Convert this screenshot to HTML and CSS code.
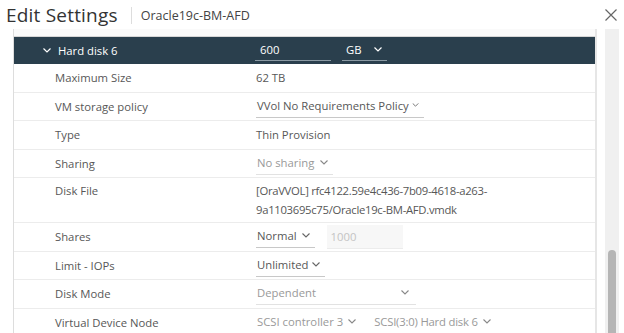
FILE: index.html
```html
<!DOCTYPE html>
<html lang="en">

<head>
  <meta charset="UTF-8" />
  <title>Edit Settings</title>
  <link rel="stylesheet" href="styles.css">
</head>

<body>
  <div class="modal">
    <div class="modal-header">
      <h1 class="title">Edit Settings</h1>
      <span class="divider"></span>
      <span class="subtitle">Oracle19c-BM-AFD</span>
      <button class="close-btn" aria-label="Close">
        <svg width="12" height="12" viewBox="0 0 12 12"><path d="M0.5 0.5L11.5 11.5M11.5 0.5L0.5 11.5" stroke="#666" stroke-width="1.2" fill="none"/></svg>
      </button>
    </div>

    <div class="modal-body">
      <div class="panel">
        <div class="prev-row"></div>

        <div class="disk-header">
          <div class="disk-title">
            <svg class="chev" width="8" height="5" viewBox="0 0 8 5"><path d="M0.5 0.5L4 4L7.5 0.5" stroke="#fff" stroke-width="1.2" fill="none"/></svg>
            Hard disk 6
          </div>
          <div class="disk-controls">
            <span class="dark-input">600</span>
            <span class="dark-select">GB
              <svg class="chev" width="8" height="5" viewBox="0 0 8 5"><path d="M0.5 0.5L4 4L7.5 0.5" stroke="#fff" stroke-width="1.2" fill="none"/></svg>
            </span>
          </div>
        </div>

        <div class="row">
          <div class="label">Maximum Size</div>
          <div class="value">62 TB</div>
        </div>
        <div class="row">
          <div class="label">VM storage policy</div>
          <div class="value"><span class="select select-policy">VVol No Requirements Policy<svg class="chev" width="7" height="4" viewBox="0 0 8 5"><path d="M0.5 0.5L4 4L7.5 0.5" stroke="#666" stroke-width="1.1" fill="none"/></svg></span></div>
        </div>
        <div class="row">
          <div class="label">Type</div>
          <div class="value">Thin Provision</div>
        </div>
        <div class="row">
          <div class="label">Sharing</div>
          <div class="value"><span class="select disabled sel-sharing">No sharing<svg class="chev" width="8" height="5" viewBox="0 0 8 5"><path d="M0.5 0.5L4 4L7.5 0.5" stroke="#888" stroke-width="1.1" fill="none"/></svg></span></div>
        </div>
        <div class="row row-tall">
          <div class="label">Disk File</div>
          <div class="value file-path">[OraVVOL] rfc4122.59e4c436-7b09-4618-a263-<br>9a1103695c75/Oracle19c-BM-AFD.vmdk</div>
        </div>
        <div class="row">
          <div class="label">Shares</div>
          <div class="value">
            <span class="select sel-shares">Normal<svg class="chev" width="8" height="5" viewBox="0 0 8 5"><path d="M0.5 0.5L4 4L7.5 0.5" stroke="#666" stroke-width="1.1" fill="none"/></svg></span>
            <span class="input-disabled">1000</span>
          </div>
        </div>
        <div class="row">
          <div class="label">Limit - IOPs</div>
          <div class="value"><span class="select sel-limit">Unlimited<svg class="chev" width="8" height="5" viewBox="0 0 8 5"><path d="M0.5 0.5L4 4L7.5 0.5" stroke="#666" stroke-width="1.1" fill="none"/></svg></span></div>
        </div>
        <div class="row">
          <div class="label">Disk Mode</div>
          <div class="value"><span class="select disabled sel-mode">Dependent<svg class="chev" width="8" height="5" viewBox="0 0 8 5"><path d="M0.5 0.5L4 4L7.5 0.5" stroke="#888" stroke-width="1.1" fill="none"/></svg></span></div>
        </div>
        <div class="row">
          <div class="label">Virtual Device Node</div>
          <div class="value">
            <span class="select disabled sel-ctrl">SCSI controller 3<svg class="chev" width="8" height="5" viewBox="0 0 8 5"><path d="M0.5 0.5L4 4L7.5 0.5" stroke="#888" stroke-width="1.1" fill="none"/></svg></span>
            <span class="select disabled sel-node">SCSI(3:0) Hard disk 6<svg class="chev" width="8" height="5" viewBox="0 0 8 5"><path d="M0.5 0.5L4 4L7.5 0.5" stroke="#888" stroke-width="1.1" fill="none"/></svg></span>
          </div>
        </div>
      </div>

      <div class="scrollbar">
        <div class="thumb"></div>
      </div>
    </div>
  </div>
</body>

</html>
```

FILE: styles.css
```css
:root {
  --band: #2a3f4d;
  --text: #575757;
  --muted: #999;
  --line: #ececec;
  --underline: #c8c8c8;
}

* {
  box-sizing: border-box;
}

body {
  margin: 0;
  background: #fff;
  font-family: 'Open Sans', sans-serif;
  color: var(--text);
  overflow: hidden;
}

.modal {
  width: 624px;
  height: 333px;
  display: flex;
  flex-direction: column;
}

.modal-header {
  height: 29px;
  display: flex;
  align-items: center;
  padding-left: 6px;
}

.title {
  margin: 0;
  font-size: 19px;
  font-weight: 400;
  color: #333;
  letter-spacing: 0.2px;
}

.divider {
  width: 1px;
  height: 17px;
  background: #ddd;
  margin: 1px 9px 0 13px;
}

.subtitle {
  font-size: 12.5px;
  color: #444;
  margin-top: 1px;
}

.close-btn {
  margin-left: auto;
  margin-right: 7px;
  margin-top: 1px;
  border: none;
  background: none;
  padding: 0;
  display: flex;
}

.modal-body {
  flex: 1;
  display: flex;
  min-height: 0;
}

.panel {
  width: 584px;
  margin-left: 13px;
  border-left: 1px solid #ddd;
  border-right: 2px solid #e6e6e6;
  font-size: 11.3px;
  white-space: nowrap;
}

.prev-row {
  height: 8px;
  background: #fafafa;
  border-bottom: 1px solid #d6d6d6;
}

.disk-header {
  height: 27px;
  background: var(--band);
  color: #fff;
  display: grid;
  grid-template-columns: 241px 1fr;
  align-items: center;
}

.disk-title {
  display: flex;
  align-items: center;
  padding-left: 29px;
  gap: 7px;
}

.disk-controls {
  display: flex;
  align-items: center;
  gap: 11px;
}

.dark-input {
  width: 76px;
  padding: 2px 5px 3px;
  border-bottom: 1px solid #8a99a3;
}

.dark-select {
  width: 45px;
  padding: 2px 5px 3px 4px;
  border-bottom: 1px solid #8a99a3;
  display: flex;
  align-items: center;
  justify-content: space-between;
}

.row {
  height: 28.5px;
  display: grid;
  grid-template-columns: 242px 1fr;
  align-items: center;
  border-bottom: 1px solid var(--line);
}

.row-tall {
  height: 45px;
  align-items: start;
  padding-top: 3px;
}

.row-tall .label {
  padding-top: 2px;
}

.label {
  padding-left: 41px;
}

.value {
  display: flex;
  align-items: center;
  gap: 12px;
}

.file-path {
  display: block;
  line-height: 19px;
  letter-spacing: -0.3px;
}

.select {
  display: inline-flex;
  align-items: center;
  justify-content: space-between;
  padding: 3px 5px 4px 1px;
  border-bottom: 1px solid var(--underline);
}

.select.disabled {
  color: var(--muted);
  border-bottom-color: #e2e2e2;
}

.select-policy {
  min-width: 164px;
  gap: 3px;
  justify-content: flex-start;
}

.sel-sharing {
  min-width: 76px;
  gap: 6px;
}

.sel-shares {
  min-width: 57px;
  gap: 5px;
}

.sel-limit {
  min-width: 66px;
  gap: 4px;
}

.sel-mode {
  min-width: 160px;
  padding-right: 7px;
}

.sel-ctrl {
  min-width: 101px;
  gap: 5px;
}

.sel-node {
  min-width: 121px;
  gap: 5px;
  letter-spacing: -0.2px;
}

.input-disabled {
  width: 76px;
  padding: 4px;
  background: #f7f7f7;
  color: #c4c4c4;
  border-bottom: 1px solid #ececec;
}

.scrollbar {
  width: 14px;
  margin-left: 8px;
  background: #f0f0f0;
  display: flex;
  flex-direction: column;
  justify-content: flex-end;
  align-items: center;
}

.thumb {
  width: 8px;
  height: 83px;
  background: #b5b5b5;
  border-radius: 4px 4px 0 0;
}
```
